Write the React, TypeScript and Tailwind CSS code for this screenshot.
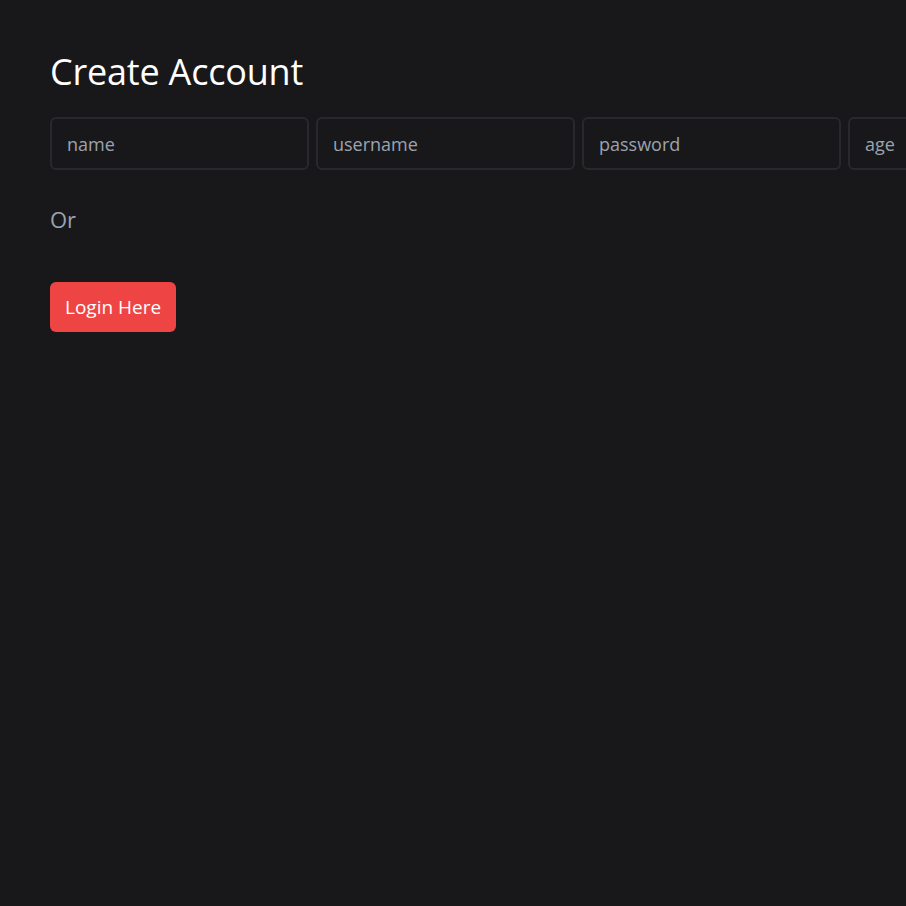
import React from 'react';

const fields = ['name', 'username', 'password', 'age'];

const App: React.FC = () => {
  return (
    <div
      className="min-h-screen w-full overflow-hidden bg-[#18181b] px-[50px] pt-[47px]"
      style={{ fontFamily: '"Open Sans", "Noto Sans", sans-serif' }}
    >
      <h1 className="text-[36px] leading-[50px] text-white tracking-[-0.2px]">Create Account</h1>

      {/* inputs are wider than the window, the last one gets cut */}
      <div className="mt-[20px] flex gap-[7px]">
        {fields.map((f) => (
          <input
            key={f}
            placeholder={f}
            className="h-[53px] w-[259px] shrink-0 rounded-[6px] border-2 border-[#29292d] bg-[#18181b] px-[15px] text-[18px] text-white outline-none placeholder:text-[#9ca3af]"
          />
        ))}
      </div>

      <p className="mt-[34px] text-[22px] leading-[30px] text-[#9ca3af]">Or</p>

      <button className="mt-[48px] h-[50px] rounded-[6px] bg-[#ef4444] px-[15px] text-[19px] text-white">
        Login Here
      </button>
    </div>
  );
};

export default App;
